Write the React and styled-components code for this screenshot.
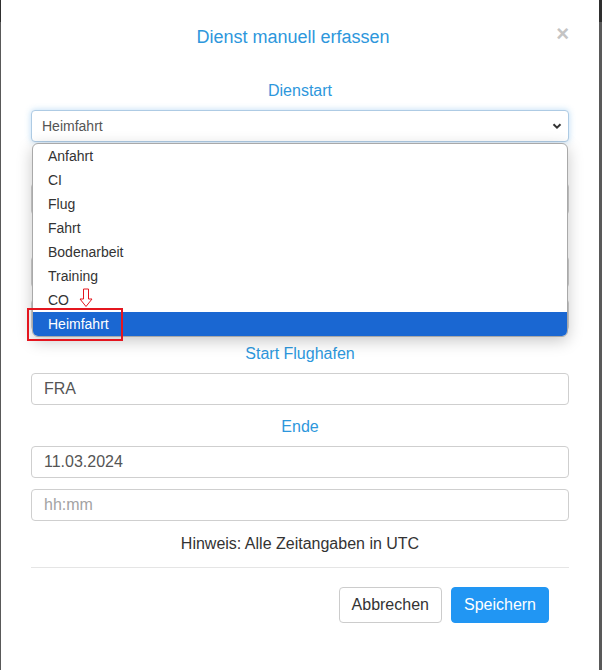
import styled, { createGlobalStyle } from 'styled-components';

const GlobalStyle = createGlobalStyle`
  html, body {
    margin: 0;
    padding: 0;
  }
  body {
    font-family: "Liberation Sans", Arial, sans-serif;
  }
`;

const Backdrop = styled.div`
  width: 602px;
  height: 670px;
  display: flex;
  padding: 0 3px 0 1px;
  box-sizing: border-box;
  background: linear-gradient(#2e2e2e 0, #2e2e2e 22px, #595959 22px);
  overflow: hidden;
`;

const Modal = styled.div`
  flex: 1;
  background: #fff;
  padding: 0 30px;
  display: flex;
  flex-direction: column;
`;

const Header = styled.div`
  display: grid;
  grid-template-columns: 1fr auto 1fr;
  align-items: start;
  padding-top: 26px;
`;

const Title = styled.h4`
  grid-column: 2;
  margin: 0 14px 0 0;
  font-size: 18px;
  line-height: 22px;
  font-weight: normal;
  color: #2d97dc;
`;

const Close = styled.button`
  justify-self: end;
  margin: -3px 0 0 0;
  padding: 0;
  border: none;
  background: none;
  font-family: "Liberation Sans", Arial, sans-serif;
  font-size: 22px;
  line-height: 22px;
  font-weight: bold;
  color: #c4c4c4;
  cursor: pointer;
`;

const Label = styled.div`
  text-align: center;
  font-size: 16px;
  line-height: 20px;
  color: #2d97dc;
  margin: ${p => (p.$first ? '33px' : '12px')} 0 9px;
  visibility: ${p => (p.$covered ? 'hidden' : 'visible')};
`;

const SelectWrap = styled.div`
  position: relative;
`;

const SelectBox = styled.div`
  height: 32px;
  box-sizing: border-box;
  border: 1px solid #aecbe4;
  border-radius: 4px;
  box-shadow: 0 0 6px rgba(102, 175, 233, 0.45);
  display: flex;
  align-items: center;
  justify-content: space-between;
  padding: 0 6px 0 10px;
  font-size: 14px;
  color: #555;
  background: #fff;
`;

const Input = styled.div`
  height: 32px;
  box-sizing: border-box;
  border: 1px solid #cfcfcf;
  border-radius: 4px;
  display: flex;
  align-items: center;
  padding: 0 12px;
  font-size: 16px;
  color: ${p => (p.$placeholder ? '#a3a3a3' : '#555')};
  background: #fff;
  margin-top: ${p => (p.$stacked ? '11px' : '0')};
  margin-bottom: ${p => (p.$covered ? '1px' : '0')};
`;

const Dropdown = styled.ul`
  position: absolute;
  top: calc(100% + 1px);
  left: 1px;
  right: 1px;
  margin: 0;
  padding: 0;
  list-style: none;
  background: #fff;
  border: 1px solid #a9a9a9;
  border-radius: 6px;
  overflow: hidden;
  box-shadow: 0 4px 16px rgba(0, 0, 0, 0.22);
  z-index: 5;
`;

const Option = styled.li`
  height: 24px;
  line-height: 24px;
  padding-left: 15px;
  font-size: 14px;
  color: ${p => (p.$active ? '#fff' : '#333')};
  background: ${p => (p.$active ? '#1a67d2' : 'transparent')};
`;

const Marker = styled.div`
  position: absolute;
  left: -4px;
  top: 198px;
  width: 92px;
  height: 29px;
  border: 2px solid #e4161f;
  z-index: 6;
`;

const Arrow = styled.svg`
  position: absolute;
  left: 48px;
  top: 178px;
  z-index: 6;
`;

const Note = styled.div`
  text-align: center;
  font-size: 16px;
  line-height: 20px;
  color: #333;
  margin-top: 13px;
`;

const Divider = styled.hr`
  border: none;
  border-top: 1px solid #e5e5e5;
  margin: 13px 0 0;
`;

const Footer = styled.div`
  display: flex;
  justify-content: flex-end;
  gap: 9px;
  padding: 19px 20px 0 0;
`;

const Button = styled.button`
  height: 36px;
  padding: 0 12px;
  border-radius: 4px;
  font-family: "Liberation Sans", Arial, sans-serif;
  font-size: 16px;
  border: 1px solid ${p => (p.$primary ? '#2196f3' : '#ccc')};
  background: ${p => (p.$primary ? '#2196f3' : '#fff')};
  color: ${p => (p.$primary ? '#fff' : '#333')};
  cursor: pointer;
`;

const options = ['Anfahrt', 'CI', 'Flug', 'Fahrt', 'Bodenarbeit', 'Training', 'CO', 'Heimfahrt'];

const Chevron = () => (
  <svg width="10" height="8" viewBox="0 0 10 8">
    <path d="M1.5 2.2 L5 5.6 L8.5 2.2" fill="none" stroke="#333" strokeWidth="2" />
  </svg>
);

export default function App() {
  const selected = 'Heimfahrt';

  return (
    <>
      <GlobalStyle />
      <Backdrop>
        <Modal>
          <Header>
            <Title>Dienst manuell erfassen</Title>
            <Close>×</Close>
          </Header>

          <Label $first>Dienstart</Label>
          <SelectWrap>
            <SelectBox>
              <span>{selected}</span>
              <Chevron />
            </SelectBox>
            <Dropdown>
              {options.map(o => (
                <Option key={o} $active={o === selected}>
                  {o}
                </Option>
              ))}
            </Dropdown>
            <Arrow width="15" height="20" viewBox="0 0 15 20">
              <path
                d="M4.5 1 H9.5 V11 H13 L7 18.5 L1 11 H4.5 Z"
                fill="#fff"
                stroke="#e4161f"
                strokeWidth="1"
              />
            </Arrow>
            <Marker />
          </SelectWrap>

          {/* fields hidden behind the open dropdown */}
          <Label $covered>Start</Label>
          <Input />
          <Label $covered>Beginn</Label>
          <Input />
          <Input $stacked $covered />

          <Label>Start Flughafen</Label>
          <Input>FRA</Input>

          <Label>Ende</Label>
          <Input>11.03.2024</Input>
          <Input $stacked $placeholder>hh:mm</Input>

          <Note>Hinweis: Alle Zeitangaben in UTC</Note>
          <Divider />
          <Footer>
            <Button>Abbrechen</Button>
            <Button $primary>Speichern</Button>
          </Footer>
        </Modal>
      </Backdrop>
    </>
  );
}
